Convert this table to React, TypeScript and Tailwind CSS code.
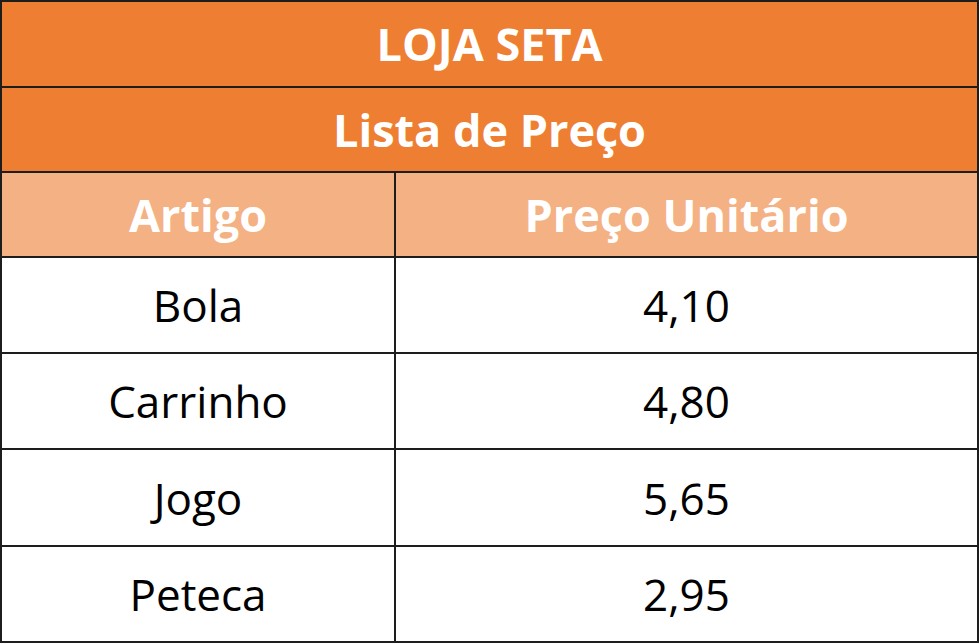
const ROWS = [
  { item: "Bola", price: "4,10", h: "h-[96px]" },
  { item: "Carrinho", price: "4,80", h: "h-[96px]" },
  { item: "Jogo", price: "5,65", h: "h-[97px]" },
  { item: "Peteca", price: "2,95", h: "h-[96px]" },
];

export default function App() {
  return (
    <div className="h-[644px] w-[980px] bg-white" style={{ fontFamily: '"Open Sans", "Noto Sans", sans-serif' }}>
      <div className="flex w-[979px] flex-col border-2 border-[#1d1d1b]">
        <div className="flex h-[84px] items-center justify-center bg-[#ee7f32] text-[45px] font-bold text-white">
          LOJA SETA
        </div>
        <div className="flex h-[85px] items-center justify-center border-t-2 border-[#1d1d1b] bg-[#ee7f32] text-[45px] font-bold text-white">
          Lista de Preço
        </div>
        <div className="grid h-[85px] grid-cols-[394px_1fr] border-t-2 border-[#1d1d1b] bg-[#f4b183] text-[45px] font-bold text-white">
          <div className="flex items-center justify-center border-r-2 border-[#1d1d1b]">Artigo</div>
          <div className="flex items-center justify-center">Preço Unitário</div>
        </div>
        {ROWS.map((r) => (
          <div key={r.item} className={`grid grid-cols-[394px_1fr] border-t-2 border-[#1d1d1b] text-[44px] text-black ${r.h}`}>
            <div className="flex items-center justify-center border-r-2 border-[#1d1d1b]">{r.item}</div>
            <div className="flex items-center justify-center">{r.price}</div>
          </div>
        ))}
      </div>
    </div>
  );
}
